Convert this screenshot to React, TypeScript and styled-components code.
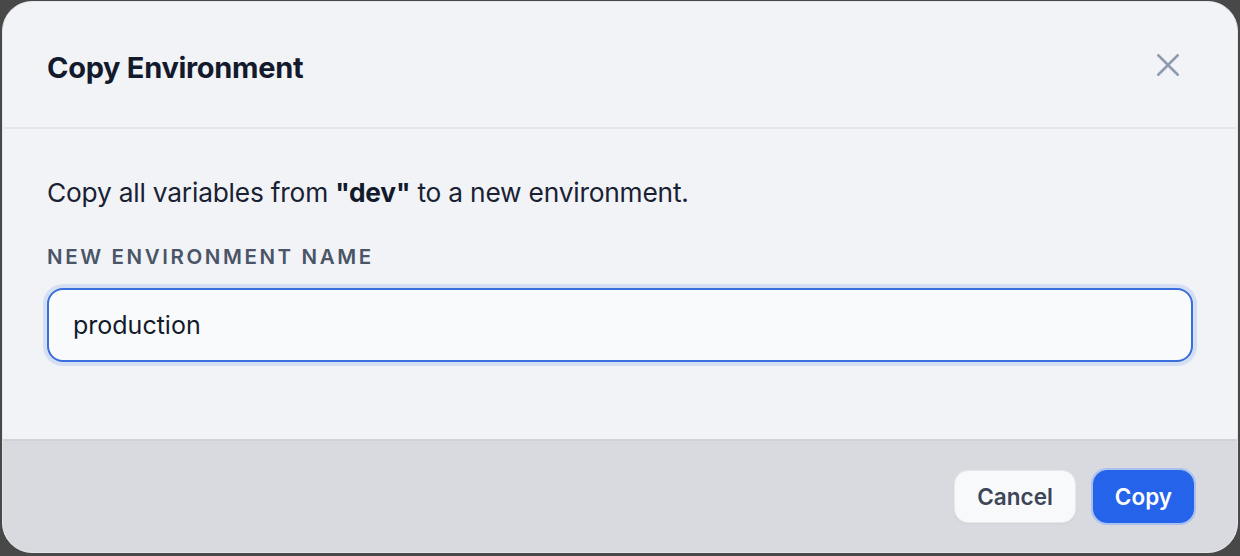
import styled, { createGlobalStyle } from 'styled-components'

const GlobalStyle = createGlobalStyle`
    html, body {
        margin: 0;
        padding: 0;
        background: #484848;
    }
    body {
        font-family: Inter, "Noto Sans", sans-serif;
        -webkit-font-smoothing: antialiased;
    }
    * {
        box-sizing: border-box;
    }
`

const Dialog = styled.div`
    margin: 1px 2px 0;
    width: 1236px;
    height: 552px;
    background: #f1f3f7;
    border: 1px solid #e2e5ea;
    border-radius: 30px;
    overflow: hidden;
    display: flex;
    flex-direction: column;
`

const Header = styled.header`
    height: 127px;
    flex-shrink: 0;
    padding: 6px 53px 0 44px;
    display: flex;
    align-items: center;
    justify-content: space-between;
    border-bottom: 2px solid #e3e6eb;
`

const Title = styled.h2`
    margin: 0;
    font-size: 29px;
    font-weight: 700;
    letter-spacing: -0.3px;
    color: #121a2c;
`

const CloseButton = styled.button`
    width: 32px;
    height: 32px;
    margin-top: -6px;
    border: none;
    background: transparent;
    padding: 0;
    display: flex;
    align-items: center;
    justify-content: center;
    color: #8e9aae;
    cursor: pointer;
`

const Body = styled.div`
    padding: 47px 44px 77px;
    display: flex;
    flex-direction: column;
`

const Description = styled.p`
    margin: 0;
    font-size: 26.3px;
    line-height: 34px;
    color: #1a2133;
    letter-spacing: -0.2px;

    strong {
        font-weight: 700;
        color: #121a2c;
    }
`

const Label = styled.label`
    margin-top: 34px;
    font-size: 20.5px;
    line-height: 26px;
    font-weight: 600;
    letter-spacing: 2.6px;
    color: #4a5567;
`

const Input = styled.input`
    margin-top: 18px;
    height: 74px;
    width: 100%;
    padding: 0 24px;
    font-family: inherit;
    font-size: 25px;
    color: #131a2b;
    background: #f9fafc;
    border: 2px solid #3a6fdc;
    border-radius: 16px;
    box-shadow: 0 0 0 4px #d5dff4;
    outline: none;
`

const Footer = styled.footer`
    flex: 1;
    background: #d8dadf;
    border-top: 2px solid #cfd2d8;
    padding: 0 43px 0 42px;
    display: flex;
    align-items: center;
    justify-content: flex-end;
    gap: 17px;
`

const Button = styled.button<{ $primary?: boolean }>`
    height: 53px;
    padding: 0 ${p => (p.$primary ? '21px' : '22px')};
    border-radius: 14px;
    font-family: inherit;
    font-size: 22.5px;
    font-weight: 600;
    cursor: pointer;
    border: 1px solid ${p => (p.$primary ? '#2563eb' : '#e6e8ec')};
    background: ${p => (p.$primary ? '#2563eb' : '#f8f9fb')};
    color: ${p => (p.$primary ? '#ffffff' : '#3d4658')};
    box-shadow: ${p => (p.$primary ? '0 0 0 2px #a9c0ef' : '0 1px 2px rgba(0,0,0,0.04)')};
`

const App = () => {
  return (
    <>
      <GlobalStyle />
      <Dialog>
        <Header>
          <Title>Copy Environment</Title>
          <CloseButton aria-label="Close">
            <svg width="26" height="26" viewBox="0 0 24 24" fill="none" stroke="currentColor" strokeWidth="2.3" strokeLinecap="round">
              <path d="M3 3L21 21M21 3L3 21" />
            </svg>
          </CloseButton>
        </Header>
        <Body>
          <Description>
            Copy all variables from <strong>"dev"</strong> to a new environment.
          </Description>
          <Label htmlFor="env-name">NEW ENVIRONMENT NAME</Label>
          <Input id="env-name" defaultValue="production" />
        </Body>
        <Footer>
          <Button>Cancel</Button>
          <Button $primary>Copy</Button>
        </Footer>
      </Dialog>
    </>
  )
}

export default App
